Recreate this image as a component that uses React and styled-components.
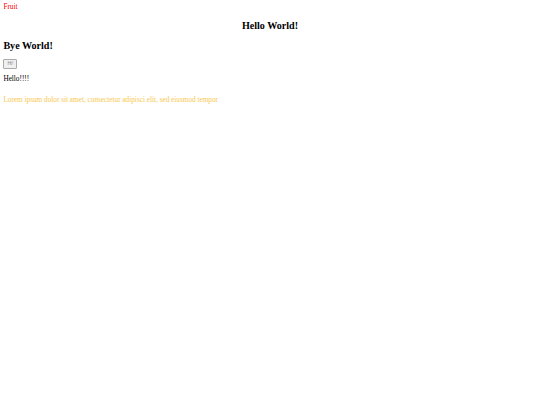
import styled, { createGlobalStyle } from 'styled-components';

const GlobalStyle = createGlobalStyle`
  html, body {
    margin: 0;
    background: #fff;
  }
  body {
    padding: 3.4px;
    font-family: "Liberation Serif", "Times New Roman", serif;
    font-size: 7.25px;
    color: #000;
    -webkit-font-smoothing: antialiased;
  }
`;

const Fruit = styled.div`
  color: red;
  line-height: 7px;
  padding-top: 1px;
`;

const Heading = styled.h2`
  margin: 8.4px 0;
  font-size: 10.1px;
  font-weight: bold;
  line-height: 1.15;
  text-align: ${({ center }) => (center ? 'center' : 'left')};
`;

const ButtonRow = styled.div`
  margin-top: -1px;
`;

const HiButton = styled.button`
  font-family: "Liberation Sans", Arial, sans-serif;
  font-size: 4.8px;
  padding: 1px 3px;
  line-height: 1.2;
  color: #888;
  background: #f0f0f0;
  border: 1px solid #aaa;
  border-radius: 1px;
`;

const Para = styled.p`
  margin: ${({ gap }) => gap || '6.5px'} 0;
  line-height: 1.15;
  color: ${({ tone }) => tone || '#000'};
`;

export default function App() {
  return (
    <>
      <GlobalStyle />
      <Fruit>Fruit</Fruit>
      <Heading center>Hello World!</Heading>
      <Heading>Bye World!</Heading>
      <ButtonRow>
        <HiButton>Hi!</HiButton>
      </ButtonRow>
      <Para>Hello!!!!</Para>
      <Para tone="#f8c84e" gap="12.5px">
        Lorem ipsum dolor sit amet, consectetur adipisci elit, sed eiusmod tempor
      </Para>
    </>
  );
}
